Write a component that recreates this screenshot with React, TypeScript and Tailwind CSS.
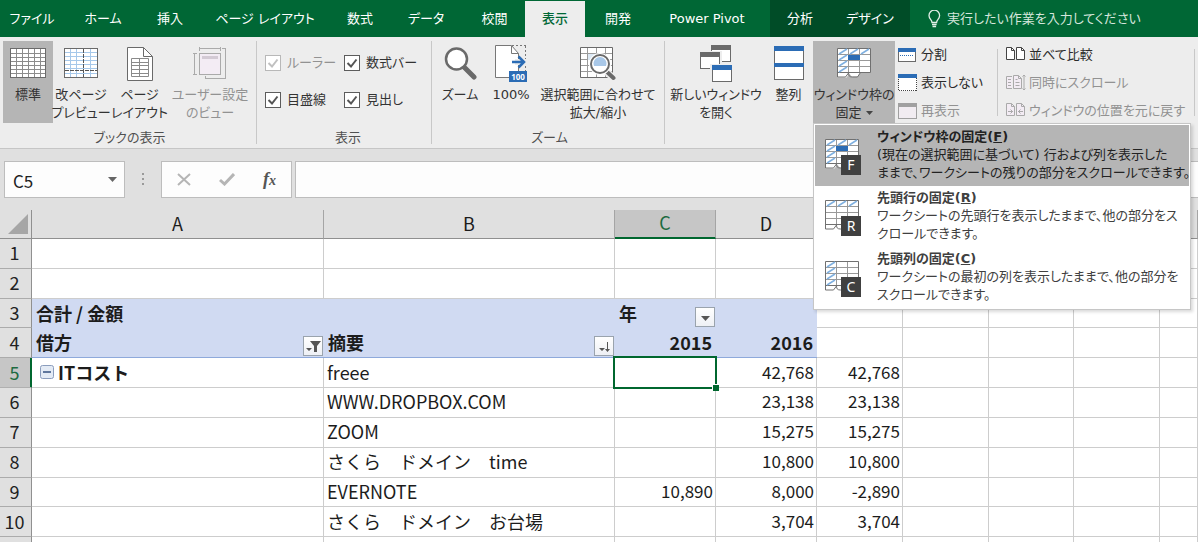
import { useState, type ReactNode } from "react";
import clsx from "clsx";

const tabs = [
  { label: "ファイル", width: "w-[64px]" },
  { label: "ホーム", width: "w-[78px]" },
  { label: "挿入", width: "w-[56px]" },
  { label: "ページ レイアウト", width: "w-[134px]" },
  { label: "数式", width: "w-[56px]" },
  { label: "データ", width: "w-[76px]" },
  { label: "校閲", width: "w-[61px]" },
  { label: "表示", width: "w-[60px]", active: true },
  { label: "開発", width: "w-[66px]" },
  { label: "Power Pivot", width: "w-[112px]" },
];

const freezeOptions: { title: string; accessKey: string; lines: string[]; kind: FreezeKind }[] = [
  {
    title: "ウィンドウ枠の固定",
    accessKey: "F",
    lines: ["(現在の選択範囲に基づいて) 行および列を表示した", "ままで、ワークシートの残りの部分をスクロールできます。"],
    kind: "panes",
  },
  {
    title: "先頭行の固定",
    accessKey: "R",
    lines: ["ワークシートの先頭行を表示したままで、他の部分をス", "クロールできます。"],
    kind: "row",
  },
  {
    title: "先頭列の固定",
    accessKey: "C",
    lines: ["ワークシートの最初の列を表示したままで、他の部分を", "スクロールできます。"],
    kind: "column",
  },
];

// Columns past D sit under the open menu, so they carry no visible letter
const columns = [
  { name: "A", label: "A" },
  { name: "B", label: "B" },
  { name: "C", label: "C" },
  { name: "D", label: "D" },
  { name: "E", label: "" },
  { name: "F", label: "" },
  { name: "G", label: "" },
  { name: "H", label: "" },
  { name: "I", label: "" },
];

const entries = [
  { row: 5, name: "freee", y2015: "", y2016: "42,768", diff: "42,768" },
  { row: 6, name: "WWW.DROPBOX.COM", y2015: "", y2016: "23,138", diff: "23,138" },
  { row: 7, name: "ZOOM", y2015: "", y2016: "15,275", diff: "15,275" },
  { row: 8, name: "さくら　ドメイン　time", y2015: "", y2016: "10,800", diff: "10,800" },
  { row: 9, name: "EVERNOTE", y2015: "10,890", y2016: "8,000", diff: "-2,890" },
  { row: 10, name: "さくら　ドメイン　お台場", y2015: "", y2016: "3,704", diff: "3,704" },
];

/* ---------- icons ---------- */

function NormalViewIcon() {
  return (
    <svg width="36" height="31" viewBox="0 0 36 31" fill="none" shapeRendering="crispEdges">
      <rect x="0.5" y="0.5" width="35" height="29" fill="#fff" stroke="#6a6a6a" />
      <path d="M1 5.5h34M1 9.5h34M1 13.5h34M1 17.5h34M1 21.5h34M1 25.5h34M6.5 1v28M12.5 1v28M18.5 1v28M24.5 1v28M30.5 1v28" stroke="#8c8c8c" />
    </svg>
  );
}

function PageBreakIcon() {
  return (
    <svg width="34" height="31" viewBox="0 0 34 31" fill="none" shapeRendering="crispEdges">
      <rect x="0.5" y="0.5" width="33" height="29" fill="#fff" stroke="#6a6a6a" />
      <path d="M1 4.5h32M1 8.5h32M1 12.5h32M1 16.5h32M1 20.5h32M1 25.5h32M6.5 1v28M12.5 1v28M26.5 1v28" stroke="#a6c8ea" />
      <path d="M19.5 1v28M1 22.5h32" stroke="#555" strokeDasharray="4 1" />
    </svg>
  );
}

function PageLayoutIcon() {
  return (
    <svg width="26" height="34" viewBox="0 0 26 34" fill="none">
      <path d="M0.5 0.5h16l9 9v24h-25z" fill="#fff" stroke="#6a6a6a" />
      <path d="M16.5 0.5v9h9" stroke="#6a6a6a" />
      <path d="M4.5 11.5h17v18h-17zM4.5 15.5h17M4.5 18.5h17M4.5 22.5h17M4.5 26.5h17M12.5 11.5v18" stroke="#8a8a8a" />
    </svg>
  );
}

function CustomViewIcon() {
  return (
    <svg width="34" height="34" viewBox="0 0 34 34" fill="none" stroke="#aaa" shapeRendering="crispEdges">
      <rect x="6.5" y="6.5" width="21" height="21" fill="#f3ecf4" />
      <path d="M9 9h16v3H9z" fill="#d3cad4" stroke="none" />
      <path d="M6.5 0v4M27.5 0v4M6.5 1.5h21M0 6.5h4M0 27.5h4M1.5 6.5v21M29 1.5h3.500v30h-20v-3" />
    </svg>
  );
}

function MagnifierIcon() {
  return (
    <svg width="33" height="34" viewBox="0 0 33 34" fill="none">
      <path d="m20.500 20.500 9.500 9.500" stroke="#6a6a6a" strokeWidth="5" strokeLinecap="round" />
      <circle cx="12.500" cy="12" r="10.500" fill="#fff" stroke="#6a6a6a" strokeWidth="2.500" />
    </svg>
  );
}

function Zoom100Icon() {
  return (
    <svg width="32" height="38" viewBox="0 0 32 38" fill="none">
      <path d="M0.500 0.500h16l7 8v24h-23z" fill="#fff" stroke="#777" />
      <path d="M16.500 1v7.500h7" stroke="#777" />
      <path d="M17 0.500h14M30.500 1v25" stroke="#777" strokeDasharray="2 2" />
      <path d="M20 14h11v6H20z" fill="#ededed" />
      <path d="M17 17h11M23.500 11.500l5.500 5.500-5.500 5.500" stroke="#2b6cb5" strokeWidth="2.500" />
      <rect x="14" y="26" width="18" height="11" fill="#2b6cb5" />
      <text x="23" y="35" textAnchor="middle" fontSize="8" fontWeight="700" fill="#fff" fontFamily="Noto Sans">100</text>
    </svg>
  );
}

function ZoomSelectionIcon() {
  return (
    <svg width="36" height="34" viewBox="0 0 36 34" fill="none">
      <path d="M0.500 0.500h32v30h-32z" fill="#fff" stroke="#6a6a6a" />
      <path d="M1 6.500h31M1 12.500h31M1 18.500h31M1 24.500h31M7.500 1v29M16.500 1v29M25.500 1v29" stroke="#9a9a9a" />
      <path d="M8 7h17v6H8z" fill="#dce9f5" />
      <path d="m26 24 7 7" stroke="#ededed" strokeWidth="7" />
      <path d="m26 24 7.500 7" stroke="#6a6a6a" strokeWidth="4" strokeLinecap="round" />
      <circle cx="20" cy="17" r="11" fill="#fff" />
      <circle cx="20" cy="17" r="9" fill="#fff" stroke="#6a6a6a" strokeWidth="2" />
      <path d="M14 19a6.500 6.500 0 1 1 12 0z" fill="#a9c8e8" />
    </svg>
  );
}

function NewWindowIcon() {
  return (
    <svg width="33" height="38" viewBox="0 0 33 38" fill="none" shapeRendering="crispEdges">
      <path d="M11.500 0.500h19v16h-19z" fill="#fff" stroke="#6a6a6a" />
      <path d="M11 0h20v5H11z" fill="#6a6a6a" />
      <path d="M-1 6h23v19H-1z" fill="#ededed" />
      <path d="M0.500 7.500h19v16h-19z" fill="#fff" stroke="#6a6a6a" />
      <path d="M0 7h20v5H0z" fill="#6a6a6a" />
      <path d="M10 19h23v19H10z" fill="#ededed" />
      <path d="M12.500 20.500h19v16h-19z" fill="#fff" stroke="#6a6a6a" />
      <path d="M12 20h20v5H12z" fill="#2b6cb5" />
    </svg>
  );
}

function ArrangeIcon() {
  return (
    <svg width="30" height="35" viewBox="0 0 30 35" fill="none" shapeRendering="crispEdges">
      <path d="M0.500 0.500h29v33h-29z" fill="#fff" stroke="#6a6a6a" />
      <path d="M0 0h30v5H0zM0 17h30v4H0z" fill="#2b6cb5" />
    </svg>
  );
}

type FreezeKind = "panes" | "row" | "column";

function FreezeIcon({ kind }: { kind: FreezeKind }) {
  return (
    <svg width="34" height="31" viewBox="0 0 34 31" fill="none">
      <path d="M0.500 0.500h33v24h-10l-3 4h-6l-2-3-3 4h-9z" fill="#fff" />
      <path d="M11.500 1v24M22.500 1v24M1 6.500h32M1 12.500h32M1 18.500h32" stroke="#999" />
      <path
        d="M0.500 29V0.500h33v24h-10l-3 4.500h-5c-3 0-4-1-4-4l-3 4h-8M1 24.500h32"
        stroke="#707070"
      />
      <path d="m2 6 8-5" stroke="#7fb0e0" strokeWidth="1.500" />
      {kind !== "column" && <path d="m13 6 8-5M24 6l8-5" stroke="#7fb0e0" strokeWidth="1.500" />}
      {kind !== "row" && <path d="m2 12 8-5M2 18l8-5M2 24l8-5" stroke="#7fb0e0" strokeWidth="1.500" />}
      {kind === "panes" && <path d="M11 7h12v5H11z" fill="#2b6cb5" />}
    </svg>
  );
}

function SplitIcon() {
  return (
    <svg width="18" height="15" viewBox="0 0 18 15" fill="none" shapeRendering="crispEdges">
      <path d="M0.500 0.500h17v13h-17z" fill="#fff" stroke="#6a6a6a" />
      <path d="M0 0h18v4H0z" fill="#2b6cb5" />
      <path d="M2 7.500h14" stroke="#2b6cb5" strokeDasharray="1 1" />
    </svg>
  );
}

function HideIcon() {
  return (
    <svg width="19" height="18" viewBox="0 0 19 18" fill="none" shapeRendering="crispEdges">
      <path d="M0.500 3.500h18v13h-18z" fill="#fff" stroke="#444" strokeDasharray="1 1" />
      <path d="M0 0h19v4H0z" fill="#2b6cb5" />
    </svg>
  );
}

function UnhideIcon() {
  return (
    <svg width="19" height="17" viewBox="0 0 19 17" fill="none" shapeRendering="crispEdges">
      <path d="M0.500 0.500h18v15h-18z" fill="#f1ecf1" stroke="#a0a0a0" />
      <path d="M0 0h19v4H0z" fill="#a0a0a0" />
    </svg>
  );
}

function CompareIcon({ kind }: { kind: "pair" | "sync" | "reset" }) {
  const stroke = kind === "pair" ? "#444" : "#aaa";
  const fill = kind === "pair" ? "#fff" : "#f3ecf4";
  return (
    <svg width="20" height="18" viewBox="0 0 20 18" fill="none" stroke={stroke}>
      {kind === "sync" ? (
        <>
          <path d="M6 2.500H0.500v12H6M15.500 14.500h-8v-13h5l3 3z" fill={fill} />
          <path d="M12.500 1.500v3h3M2 5.500h3M2 8.500h3M2 11.500h3M9.500 5.500h2M9.500 8.500h4M9.500 11.500h4" />
          <path d="M18 1v15M16.500 2.500 18 1l1.500 1.500M16.500 14.500 18 16l1.500-1.500" />
        </>
      ) : (
        <>
          <path d="M0.500 1.500h5l3 3v9h-8zM10.500 1.500h5l3 3v9h-8z" fill={fill} />
          <path d="M5.500 1.500v3h3M15.500 1.500v3h3" />
        </>
      )}
      {kind === "reset" && <path d="M2 9.500h5M4.500 7.500l2 2-2 2M17 9.500h-5M14.500 7.500l-2 2 2 2" />}
    </svg>
  );
}

function BulbIcon() {
  return (
    <svg width="13" height="18" viewBox="0 0 13 18" fill="none" stroke="#e3efe8" strokeWidth="1.300">
      <path d="M4 12.500c0-3-3-3.500-3-7a5.300 5.300 0 0 1 10.600 0c0 3.500-3 4-3 7zM4 14.500h4.600M4.500 16.500h3.600" />
    </svg>
  );
}

function Caret() {
  return (
    <svg width="9" height="5" viewBox="0 0 9 5">
      <path d="M0 0h9L4.500 5z" fill="#666" />
    </svg>
  );
}

function SmallCaret() {
  return (
    <svg width="7" height="4" viewBox="0 0 7 4">
      <path d="M0 0h7L3.500 4z" fill="#444" />
    </svg>
  );
}

/* ---------- ribbon ---------- */

type RibbonButtonProps = {
  icon: ReactNode;
  lines: string[];
  width: string;
  pressed?: boolean;
  disabled?: boolean;
};

function RibbonButton({ icon, lines, width, pressed, disabled }: RibbonButtonProps) {
  return (
    <button
      type="button"
      disabled={disabled}
      aria-pressed={pressed}
      className={clsx(
        "flex h-[82px] shrink-0 flex-col items-center whitespace-nowrap text-[13px] leading-[18px]",
        width,
        pressed && "bg-[#b5b5b5]",
        disabled ? "text-[#929292]" : "text-[#333]",
      )}
    >
      <span className="flex h-[45px] items-center">{icon}</span>
      {lines.map((line) => (
        <span key={line}>{line}</span>
      ))}
    </button>
  );
}

function RibbonGroup({ label, className, children }: { label?: string; className: string; children: ReactNode }) {
  return (
    <section className={clsx("flex shrink-0 flex-col pt-1", className)}>
      <div className="flex h-[88px] items-start">{children}</div>
      <div className="text-center text-[13px] leading-[18px] text-[#505050]">{label}</div>
    </section>
  );
}

function Divider() {
  return <div className="my-1 w-px shrink-0 bg-[#c8c8c8]" />;
}

function Check({ label, disabled }: { label: string; disabled?: boolean }) {
  return (
    <label className={clsx("flex items-center gap-1.5 whitespace-nowrap text-[13px] leading-[18px]", disabled ? "text-[#929292]" : "text-[#333]")}>
      <span className="grid">
        <input
          type="checkbox"
          defaultChecked
          disabled={disabled}
          className="peer size-4 appearance-none border border-[#5c5c5c] bg-white [grid-area:1/1] disabled:border-[#b8b8b8]"
        />
        <svg className="pointer-events-none invisible size-4 [grid-area:1/1] peer-checked:visible" viewBox="0 0 16 16" fill="none">
          <path d="m3.500 8 3.500 3.500L12.500 4.500" stroke={disabled ? "#c0c0c0" : "#555"} strokeWidth="2" />
        </svg>
      </span>
      {label}
    </label>
  );
}

function SmallButton({ icon, label, disabled }: { icon: ReactNode; label: string; disabled?: boolean }) {
  return (
    <button
      type="button"
      disabled={disabled}
      className={clsx("flex h-7 items-center gap-[3px] whitespace-nowrap text-[13px] leading-[18px]", disabled ? "text-[#929292]" : "text-[#2b2b2b]")}
    >
      <span className="flex w-5 shrink-0">{icon}</span>
      {label}
    </button>
  );
}

function FreezeMenu() {
  const [open, setOpen] = useState(true);

  return (
    <div className="relative">
      <button
        type="button"
        aria-haspopup="menu"
        aria-expanded={open}
        onClick={() => setOpen((v) => !v)}
        className="flex h-[82px] w-[82px] flex-col items-center whitespace-nowrap bg-[#b5b5b5] text-[13px] leading-[18px] text-[#333]"
      >
        <span className="flex h-[45px] items-center">
          <FreezeIcon kind="panes" />
        </span>
        <span>ウィンドウ枠の</span>
        <span className="flex items-center gap-1">
          固定
          <SmallCaret />
        </span>
      </button>
      {open && (
        <div role="menu" className="absolute left-0 top-full z-20 w-[378px] border border-[#c6c6c6] bg-white p-px shadow-[2px_2px_3px_rgba(0,0,0,0.15)]">
          {freezeOptions.map((option, i) => (
            <button
              key={option.accessKey}
              type="button"
              role="menuitem"
              className={clsx("flex h-[61px] w-full items-start whitespace-nowrap pl-2.5 text-left", i === 0 && "bg-[#b5b5b5]")}
            >
              <span className="relative mt-3.5 w-[52px] shrink-0">
                <FreezeIcon kind={option.kind} />
                <kbd className="absolute left-4 top-4 flex size-5 items-center justify-center bg-[#404040] text-[14px] leading-[18px] text-white [font-family:'Noto_Sans',sans-serif]">
                  {option.accessKey}
                </kbd>
              </span>
              <span className={clsx("pt-[3px] text-[13px] leading-[18px]", i === 0 ? "text-[#222]" : "text-[#404040]")}>
                <b className="block">
                  {option.title}(<u>{option.accessKey}</u>)
                </b>
                {option.lines.map((line) => (
                  <span key={line} className="block">{line}</span>
                ))}
              </span>
            </button>
          ))}
        </div>
      )}
    </div>
  );
}

function TabBar() {
  return (
    <nav className="flex h-[37px] bg-[#006735] text-[13px] leading-[18px] text-white">
      {tabs.map((tab) => (
        <button
          key={tab.label}
          type="button"
          className={clsx("shrink-0 whitespace-nowrap", tab.width, tab.active && "mt-px bg-[#ededed] font-medium text-[#006735]")}
        >
          {tab.label}
        </button>
      ))}
      <div className="ml-[7px] flex shrink-0 bg-[#004c27]">
        <button type="button" className="w-[60px]">分析</button>
        <button type="button" className="w-20">デザイン</button>
      </div>
      <label className="ml-[18px] flex grow items-center gap-1.5">
        <BulbIcon />
        <input aria-label="操作アシスト" placeholder="実行したい作業を入力してください" className="min-w-0 grow bg-transparent outline-none placeholder:text-[#d5e6dc]" />
      </label>
    </nav>
  );
}

function Ribbon() {
  return (
    <div className="flex h-[112px] border-b border-[#c6c6c6] bg-[#ededed]">
      <RibbonGroup label="ブックの表示" className="w-[256px] pl-[3px]">
        <RibbonButton icon={<NormalViewIcon />} lines={["標準"]} width="w-[50px]" pressed />
        <RibbonButton icon={<PageBreakIcon />} lines={["改ページ", "プレビュー"]} width="w-[56px]" />
        <RibbonButton icon={<PageLayoutIcon />} lines={["ページ", "レイアウト"]} width="w-[61px]" />
        <RibbonButton icon={<CustomViewIcon />} lines={["ユーザー設定", "のビュー"]} width="w-[80px]" disabled />
      </RibbonGroup>
      <Divider />
      <RibbonGroup label="表示" className="w-[174px] pl-2">
        <div className="grid h-[77px] grid-cols-[79px_auto] items-center pt-1">
          <Check label="ルーラー" disabled />
          <Check label="数式バー" />
          <Check label="目盛線" />
          <Check label="見出し" />
        </div>
      </RibbonGroup>
      <Divider />
      <RibbonGroup label="ズーム" className="w-[232px] pl-[3px]">
        <RibbonButton icon={<MagnifierIcon />} lines={["ズーム"]} width="w-[50px]" />
        <RibbonButton icon={<Zoom100Icon />} lines={["100%"]} width="w-[52px]" />
        <RibbonButton icon={<ZoomSelectionIcon />} lines={["選択範囲に合わせて", "拡大/縮小"]} width="w-[122px]" />
      </RibbonGroup>
      <Divider />
      <RibbonGroup className="pl-[3px]">
        <RibbonButton icon={<NewWindowIcon />} lines={["新しいウィンドウ", "を開く"]} width="w-[96px]" />
        <RibbonButton icon={<ArrangeIcon />} lines={["整列"]} width="w-[49px]" />
        <FreezeMenu />
        <div className="pl-[3px]">
          <SmallButton icon={<SplitIcon />} label="分割" />
          <SmallButton icon={<HideIcon />} label="表示しない" />
          <SmallButton icon={<UnhideIcon />} label="再表示" disabled />
        </div>
      </RibbonGroup>
      <div className="ml-auto flex shrink-0">
        <div className="mb-8 mt-3 w-px bg-[#c8c8c8]" />
        <div className="w-[196px] pl-2 pt-1">
          <SmallButton icon={<CompareIcon kind="pair" />} label="並べて比較" />
          <SmallButton icon={<CompareIcon kind="sync" />} label="同時にスクロール" disabled />
          <SmallButton icon={<CompareIcon kind="reset" />} label="ウィンドウの位置を元に戻す" disabled />
        </div>
        <div className="mb-8 mr-[3px] mt-3 w-px bg-[#c8c8c8]" />
      </div>
    </div>
  );
}

/* ---------- formula bar ---------- */

function FormulaBar() {
  return (
    <div className="flex h-[61px] bg-[#e0e0e0] pl-1 pt-3">
      <div className="flex h-[37px] w-[121px] shrink-0 items-center border border-[#bdbdbd] bg-[#fdfdfd] pl-2 pr-[7px]">
        <input aria-label="名前ボックス" defaultValue="C5" className="min-w-0 grow bg-transparent pt-0.5 text-[17px] leading-[28px] text-[#222] outline-none" />
        <button type="button" aria-label="名前の一覧">
          <Caret />
        </button>
      </div>
      <svg className="mx-[17px] mt-3 shrink-0" width="2" height="13" fill="#9a9a9a">
        <path d="M0 0h2v2H0zM0 5h2v2H0zM0 10h2v2H0z" />
      </svg>
      <div className="flex h-[37px] w-[131px] shrink-0 items-center border border-[#bdbdbd] bg-[#fdfdfd]">
        <button type="button" aria-label="キャンセル" className="flex w-[43px] justify-center">
          <svg width="14" height="13" viewBox="0 0 14 13" fill="none" stroke="#b5b5b5" strokeWidth="2">
            <path d="m1 1 12 11M13 1 1 12" />
          </svg>
        </button>
        <button type="button" aria-label="入力" className="flex w-[43px] justify-center">
          <svg width="16" height="13" viewBox="0 0 16 13" fill="none" stroke="#b5b5b5" strokeWidth="3">
            <path d="m1 7 4.500 4L15 1" />
          </svg>
        </button>
        <button type="button" aria-label="関数の挿入" className="w-[43px] text-[18px] font-bold italic leading-[18px] text-[#555] [font-family:'Liberation_Serif',serif]">
          f<span className="text-[14px]">x</span>
        </button>
      </div>
      <input aria-label="数式バー" className="ml-[3px] h-[37px] min-w-0 grow border border-r-0 border-[#bdbdbd] bg-[#fdfdfd] px-2 outline-none" />
    </div>
  );
}

/* ---------- sheet ---------- */

const cell = "border-b border-r border-[#cdcdcd] bg-white p-0 pb-0.5 leading-[26px]";
const pivotCell = "bg-[#d0daf2] p-0 pb-0.5 leading-[26px] font-bold";

function RowHeader({ n, selected }: { n: number | string; selected?: boolean }) {
  return (
    <th
      scope="row"
      className={clsx(
        "border-b border-r p-0 pb-0.5 pr-0.5 text-center font-normal leading-[26px]",
        selected ? "border-b-[#b0b0b0] border-r-[#00672f] bg-[#c6c6c6] text-[#1d6b41] shadow-[inset_-1px_0_#00672f]" : "border-b-[#ababab] border-r-[#909090] bg-[#e0e0e0] text-[#222]",
      )}
    >
      {n}
    </th>
  );
}

function FilterButton({ kind, label }: { kind: "filter" | "sort" | "plain"; label: string }) {
  return (
    <button
      type="button"
      aria-label={label}
      className="absolute bottom-px right-px flex size-5 items-center justify-center border border-[#9aa3ad] bg-linear-to-b from-white to-[#eef0f5]"
    >
      {kind === "plain" && (
        <svg width="9" height="5" className="mt-0.5">
          <path d="M0 0h9L4.500 5z" fill="#555" />
        </svg>
      )}
      {kind === "filter" && (
        <svg width="16" height="13" viewBox="0 0 16 13" fill="#555">
          <path d="M5 1h11l-4 5v6H9V6zM1 8h6l-3 3z" />
        </svg>
      )}
      {kind === "sort" && (
        <svg width="13" height="13" viewBox="0 0 13 13" fill="#555">
          <path d="M1 8h6l-3 3zM9 2h1v7h2l-2.500 3L7 9h2z" />
        </svg>
      )}
    </button>
  );
}

function EmptyCells({ count }: { count: number }) {
  return Array.from({ length: count }, (_, i) => <td key={i} className={cell} />);
}

function Sheet() {
  return (
    <table className="h-[357px] w-full table-fixed border-separate border-spacing-0 text-[18px] text-[#1c1c1c]">
      <colgroup>
        <col className="w-8" />
        <col className="w-[292px]" />
        <col className="w-[291px]" />
        <col className="w-[101px]" />
        <col className="w-[101px]" />
        <col className="w-[86px]" />
        <col className="w-[86px]" />
        <col className="w-[85px]" />
        <col className="w-[86px]" />
        <col />
      </colgroup>
      <thead>
        <tr className="h-[29px]">
          <th className="border-b border-r border-[#909090] bg-[#e0e0e0] p-0">
            <svg className="ml-2" width="20" height="20">
              <path d="M20 0v20H0z" fill="#a6a6a6" />
            </svg>
          </th>
          {columns.map((column) => (
            <th
              key={column.name}
              scope="col"
              aria-label={column.name}
              className={clsx(
                "border-r p-0 pb-0.5 text-center font-normal leading-[25px]",
                column.name === "C" ? "border-b-2 border-b-[#00672f] border-r-[#a5a5a5] bg-[#c6c6c6] text-[#1d6b41]" : "border-b border-b-[#909090] border-r-[#a5a5a5] bg-[#e0e0e0]",
              )}
            >
              {column.label}
            </th>
          ))}
        </tr>
      </thead>
      <tbody>
        {[1, 2].map((n) => (
          <tr key={n}>
            <RowHeader n={n} />
            <EmptyCells count={9} />
          </tr>
        ))}
        <tr>
          <RowHeader n={3} />
          <td className={clsx(pivotCell, "pl-1")}>合計 / 金額</td>
          <td className={pivotCell} />
          <td className={clsx(pivotCell, "relative pl-1")}>
            年
            <FilterButton kind="plain" label="年の絞り込み" />
          </td>
          <td className={pivotCell} />
          <EmptyCells count={5} />
        </tr>
        <tr>
          <RowHeader n={4} />
          <td className={clsx(pivotCell, "relative border-b border-[#8ea9db] pl-1")}>
            借方
            <FilterButton kind="filter" label="借方の絞り込み" />
          </td>
          <td className={clsx(pivotCell, "relative border-b border-[#8ea9db] pl-1")}>
            摘要
            <FilterButton kind="sort" label="摘要の並べ替え" />
          </td>
          <td className={clsx(pivotCell, "border-b border-[#8ea9db] pr-1 text-right")}>2015</td>
          <td className={clsx(pivotCell, "border-b border-[#8ea9db] pr-1 text-right")}>2016</td>
          <EmptyCells count={5} />
        </tr>
        {entries.map((entry) => (
          <tr key={entry.row}>
            <RowHeader n={entry.row} selected={entry.row === 5} />
            <td className={cell}>
              {entry.row === 5 && (
                <div className="flex items-center gap-1 pl-2 font-bold">
                  <button type="button" aria-label="折りたたむ">
                    <svg width="14" height="14" viewBox="0 0 14 14" className="block">
                      <rect x="0.500" y="0.500" width="13" height="13" rx="2" fill="#e4ebf5" stroke="#8b9dbd" />
                      <path d="M3 7h8" stroke="#35507f" strokeWidth="1.500" />
                    </svg>
                  </button>
                  ITコスト
                </div>
              )}
            </td>
            <td className={clsx(cell, "whitespace-nowrap pl-[3px]")}>{entry.name}</td>
            <td className={clsx(cell, "relative pr-0.5 text-right text-[17px]")}>
              {entry.y2015}
              {entry.row === 5 && (
                <div className="absolute -inset-0.5 z-10 border-2 border-[#00672f]">
                  <div className="absolute -bottom-1 -right-1 size-[7px] border-l border-t border-white bg-[#00672f]" />
                </div>
              )}
            </td>
            <td className={clsx(cell, "pr-0.5 text-right text-[17px]")}>{entry.y2016}</td>
            <td className={clsx(cell, "pr-0.5 text-right text-[17px]")}>{entry.diff}</td>
            <EmptyCells count={4} />
          </tr>
        ))}
        <tr>
          <RowHeader n={"\u00a0"} />
          <EmptyCells count={9} />
        </tr>
      </tbody>
    </table>
  );
}

export default function App() {
  return (
    <div className="h-screen overflow-hidden bg-[#e0e0e0] [font-family:'Noto_Sans_CJK_JP',sans-serif]">
      <header className="[font-family:'DejaVu_Sans','Noto_Sans_CJK_JP',sans-serif] [font-feature-settings:'palt']">
        <TabBar />
        <Ribbon />
      </header>
      <FormulaBar />
      <Sheet />
    </div>
  );
}
